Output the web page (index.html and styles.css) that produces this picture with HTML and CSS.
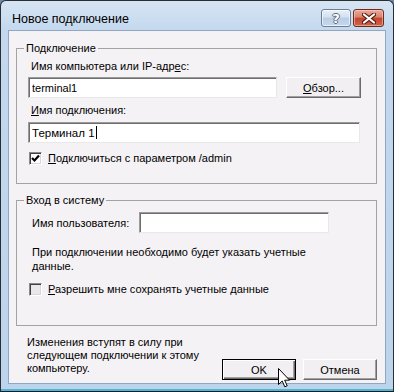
FILE: index.html
```html
<!DOCTYPE html>
<html>
<head>
  <meta charset="utf-8">
  <title>Новое подключение</title>
  <link rel="stylesheet" href="styles.css">
</head>
<body>

  <div class="window">
    <div class="titlebar">
      <span class="title">Новое подключение</span>
      <div class="caption-buttons">
        <button class="cap-btn help"><span>?</span></button>
        <button class="cap-btn close">
          <svg width="14" height="11" viewBox="0 0 14 11">
            <path d="M2 1.5 L12 9.5 M12 1.5 L2 9.5" stroke="#5a1d12" stroke-width="4.2" stroke-linecap="round"/>
            <path d="M2 1.5 L12 9.5 M12 1.5 L2 9.5" stroke="#fff" stroke-width="2.2" stroke-linecap="round"/>
          </svg>
        </button>
      </div>
    </div>

    <div class="client">
      <fieldset class="group group-conn">
        <legend>Подключение</legend>
        <div class="group-body">
          <div class="field-label">Имя компьютера или IP-адр<u>е</u>с:</div>
          <div class="row">
            <input class="text-input host" type="text" value="terminal1">
            <button class="btn browse"><u>О</u>бзор...</button>
          </div>
          <div class="field-label second"><u>И</u>мя подключения:</div>
          <div class="text-input conn-name">Терминал 1<span class="caret"></span></div>
          <label class="check first-check">
            <span class="box">
              <svg width="9" height="9" viewBox="0 0 9 9"><path d="M1 4 L3.5 6.5 L8 1.5" fill="none" stroke="#000" stroke-width="2.2"/></svg>
            </span>
            <span><u>П</u>одключиться с параметром /admin</span>
          </label>
        </div>
      </fieldset>

      <fieldset class="group group-login">
        <legend>Вход в систему</legend>
        <div class="group-body">
          <div class="row user-row">
            <span class="user-label">Имя пользователя:</span>
            <input class="text-input user" type="text" value="">
          </div>
          <p class="note">При подключении необходимо будет указать учетные<br>данные.</p>
          <label class="check">
            <span class="box unchecked"></span>
            <span><u>Р</u>азрешить мне сохранять учетные данные</span>
          </label>
        </div>
      </fieldset>

      <div class="footer">
        <p class="footer-text">Изменения вступят в силу при<br>следующем подключении к этому<br>компьютеру.</p>
        <div class="actions">
          <button class="btn default">OK</button>
          <button class="btn">Отмена</button>
        </div>
      </div>
    </div>

    <svg class="cursor" width="13" height="20" viewBox="0 0 13 20">
      <path d="M0.5 0.5 L0.5 16.5 L4.2 13 L6.8 18.8 L9.2 17.8 L6.7 12.2 L11.6 12.2 Z" fill="#fff" stroke="#000" stroke-width="1"/>
    </svg>
  </div>

</body>
</html>
```

FILE: styles.css
```css
body {
  margin: 0;
  padding: 0;
  background-color: #6f8aa8;
  font-family: "Liberation Sans", Arial, sans-serif;
  font-size: 11px;
  color: #000;
}

.window {
  position: relative;
  width: 394px;
  height: 392px;
  box-sizing: border-box;
  border: 1px solid #2a2d33;
  border-bottom-color: #1b1b1b;
  border-radius: 6px 6px 0 0;
  background: linear-gradient(to bottom, #d6e5f4 0px, #c3d8ee 30px, #bcd4ec 100%);
  box-shadow: inset 0 -2px 0 #4fb4d6;
  display: flex;
  flex-direction: column;
}

.titlebar {
  display: flex;
  align-items: flex-start;
  height: 29px;
  box-sizing: border-box;
  padding: 8px 9px 0 11px;
}

.title {
  margin-top: 2px;
  line-height: 16px;
  font-size: 12.5px;
  color: #000;
}

.caption-buttons {
  margin-left: auto;
  display: flex;
  gap: 2px;
}

.cap-btn {
  width: 30px;
  height: 18px;
  padding: 0;
  border-radius: 3px;
  display: flex;
  align-items: center;
  justify-content: center;
  box-sizing: border-box;
}

.help {
  border: 1px solid #6d7f98;
  background: linear-gradient(to bottom, #e9f0f8 0%, #d3e0ef 45%, #b9cde4 50%, #c6d8ec 100%);
  box-shadow: inset 0 0 0 1px rgba(255, 255, 255, 0.6);
}

.help span {
  font-family: "DejaVu Sans", sans-serif;
  font-weight: bold;
  font-size: 13px;
  line-height: 13px;
  color: #fff;
  text-shadow: -1px 0 #5b6a80, 1px 0 #5b6a80, 0 -1px #5b6a80, 0 1px #5b6a80;
}

.close {
  width: 31px;
  border: 1px solid #6e2a1f;
  background: linear-gradient(to bottom, #e9a99a 0%, #d9826f 45%, #c4442c 50%, #d0644b 100%);
  box-shadow: inset 0 0 0 1px rgba(255, 220, 210, 0.5);
}

.client {
  flex: 1;
  margin: 0 7px 7px 7px;
  border: 1px solid #8fa7c3;
  background-color: #f5f2f5;
  padding: 11px 8px 0 7px;
  display: flex;
  flex-direction: column;
}

.group {
  margin: 0;
  padding: 0;
  border: 1px solid #a3a3a3;
  min-width: 0;
}

.group legend {
  margin-left: 7px;
  padding: 0 2px;
  line-height: 13px;
}

.group-body {
  padding: 5px 14px 18px 11px;
}

.field-label {
  margin-left: 3px;
  line-height: 13px;
}

.field-label.second {
  margin-top: 6px;
}

.row {
  display: flex;
  align-items: center;
}

.text-input {
  height: 21px;
  box-sizing: border-box;
  border: 1px solid;
  border-color: #9b9b9b #e8e8e8 #e8e8e8 #9b9b9b;
  box-shadow: inset 1px 1px 0 #6d6d6d;
  background-color: #fff;
  font-family: "Liberation Sans", Arial, sans-serif;
  font-size: 11px;
  padding: 0 2px 0 3px;
  margin: 0;
  outline: none;
  flex-shrink: 0;
}

.host {
  width: 249px;
  margin-top: 4px;
}

.browse {
  width: 75px;
  height: 22px;
  margin: 4px 0 0 9px;
  flex-shrink: 0;
}

.conn-name {
  width: 332px;
  margin-top: 5px;
  display: flex;
  align-items: center;
  font-size: 11.5px;
}

.caret {
  display: inline-block;
  width: 1px;
  height: 13px;
  margin-left: 1px;
  background-color: #000;
}

.btn {
  height: 21px;
  box-sizing: border-box;
  padding: 0;
  font-family: "Liberation Sans", Arial, sans-serif;
  font-size: 11px;
  color: #000;
  background-color: #f1eff1;
  border: 1px solid;
  border-color: #fff #6b6b6b #6b6b6b #fff;
  box-shadow: inset -1px -1px 0 #a0a0a0;
}

.check {
  display: flex;
  align-items: center;
  gap: 6px;
  margin: 9px 0 0 1px;
  line-height: 13px;
}

.box {
  width: 13px;
  height: 13px;
  box-sizing: border-box;
  border: 1px solid;
  border-color: #8a8a8a #fff #fff #8a8a8a;
  box-shadow: inset 1px 1px 0 #404040, inset -1px -1px 0 #d8d8d8;
  background-color: #fff;
  display: flex;
  align-items: center;
  justify-content: center;
}

.box.unchecked {
  background-color: #e8e8e8;
}

.first-check {
  margin-top: 9px;
}

.user-label {
  width: 107px;
  margin-left: 4px;
}

.user {
  width: 190px;
}

.note {
  margin: 12px 0 0 4px;
  line-height: 14px;
}

.group-login {
  margin-top: 10px;
}

.group-login .group-body {
  padding-bottom: 29px;
}

.group-login .check {
  margin-top: 10px;
}

.footer {
  display: flex;
  align-items: flex-start;
  margin-top: 10px;
}

.footer-text {
  margin: 0 0 0 11px;
  line-height: 13px;
  font-size: 11px;
}

.actions {
  margin: 23px 0 0 auto;
  display: flex;
  gap: 7px;
}

.actions .btn {
  width: 74px;
}

.btn.default {
  border-color: #000;
  box-shadow: inset 1px 1px 0 #fff, inset -1px -1px 0 #6b6b6b, inset -2px -2px 0 #a0a0a0;
}

.cursor {
  position: absolute;
  left: 277px;
  top: 367px;
}
```
